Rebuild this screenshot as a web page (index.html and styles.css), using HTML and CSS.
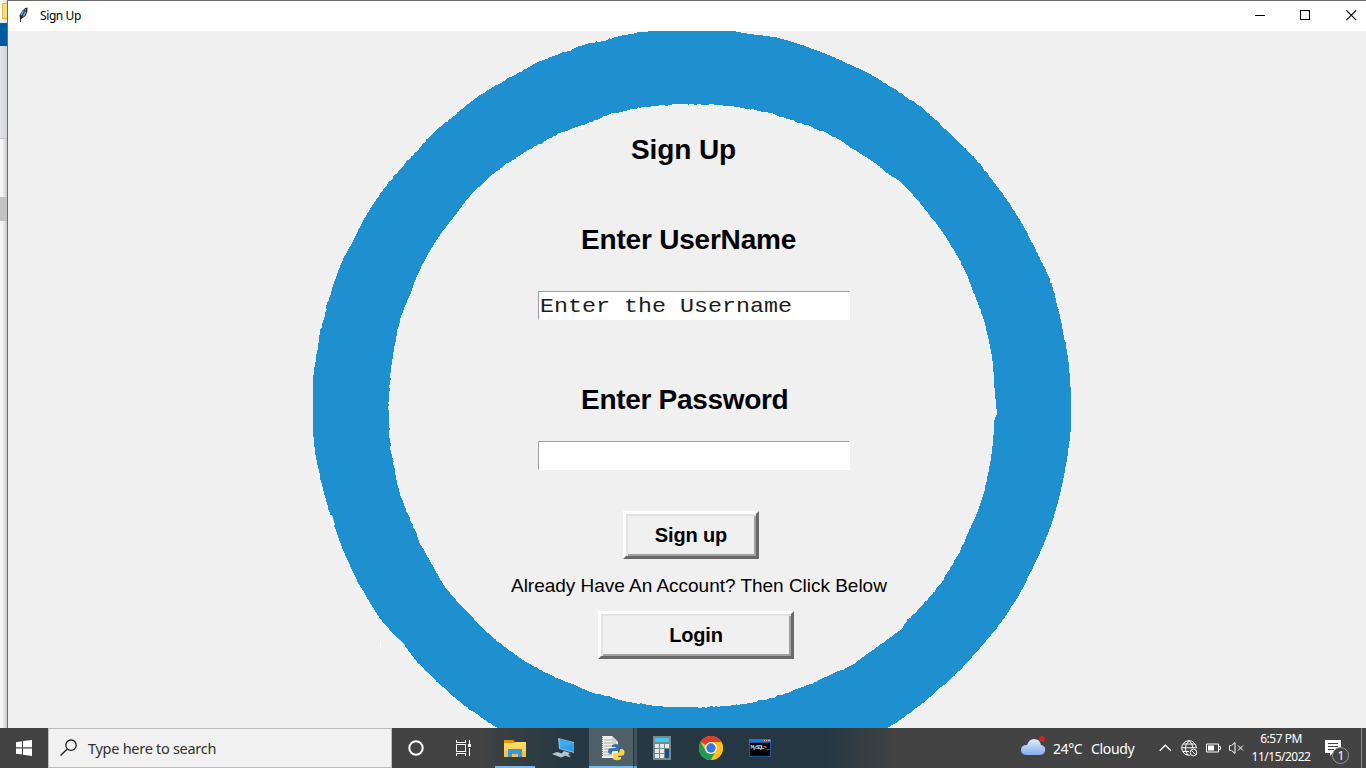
FILE: index.html
```html
<!DOCTYPE html>
<html lang="en">
<head>
<meta charset="utf-8">
<title>Sign Up</title>
<link rel="stylesheet" href="styles.css">
</head>
<body>
<div class="desktop">
  <div class="workspace">
    <div class="behind">
      <div class="behind-top"><i></i></div>
      <div class="behind-blue"></div>
      <div class="behind-ribbon"></div>
      <div class="behind-list"></div>
      <div class="behind-selected"></div>
      <div class="behind-rest"></div>
    </div>
    <main class="window">
      <header class="titlebar">
        <svg class="feather" width="16" height="16" viewBox="0 0 16 16"><path d="M4 15V11L3.500 8.500 6 4 9 1.200 11.500.5 11.300 5 9.500 9 6 11.500 4.600 12Z" fill="#23272e"/><path d="M5 9.500 6 5.500 8.500 2.500 10 2 9.500 5 7.500 9Z" fill="#5b92dd"/><path d="M5 8 7 4M7.500 9.500 10 5" stroke="#a9c8ef" stroke-width=".8"/><path d="M4.500 15V12L9 3" stroke="#151515" stroke-width=".8" fill="none"/></svg>
        <h1 class="title">Sign Up</h1>
        <div class="controls">
          <svg width="11" height="11" shape-rendering="crispEdges"><path d="M0 5h10v1H0z"/></svg>
          <svg width="11" height="11" shape-rendering="crispEdges"><path d="M.5.5h9v9h-9z" fill="none" stroke="#000"/></svg>
          <svg class="close" width="11" height="11"><path d="M.3.300 10.200 10.200M10.200.3.300 10.200" fill="none" stroke="#000" stroke-width="1.100"/></svg>
        </div>
      </header>
      <section class="client">
        <svg class="ring" width="1358" height="697" viewBox="8 31 1358 697">
          <path id="ring" fill="#1e90d0" fill-rule="evenodd" shape-rendering="crispEdges"/>
          <path fill="#fff" d="M320 485l3 2v4h-3zM330 515h2l3 10-5 2zM397 637l8 8v2zM421 667l7 6h-3zM380 642h1v6h-1zM1061 167h1v2h-1zM580 126l5 1-3 3z"/>
        </svg>
        <form class="form">
          <h2 class="heading heading-main">Sign Up</h2>
          <h2 class="heading heading-user">Enter UserName</h2>
          <div class="entry entry-user"><span>Enter the Username</span></div>
          <h2 class="heading heading-pass">Enter Password</h2>
          <div class="entry entry-pass"></div>
          <div class="button button-signup">Sign up</div>
          <p class="hint">Already Have An Account? Then Click Below</p>
          <div class="button button-login">Login</div>
        </form>
      </section>
    </main>
  </div>
  <footer class="taskbar">
    <div class="start"><svg width="16" height="16"><path fill="#fff" d="M0 2.200 6 1.300V7.300H0zM7 1.100 16 0V7.300H7zM0 8.400H6V14.600L0 13.800zM7 8.400H16V16L7 14.700z"/></svg></div>
    <div class="search">
      <svg width="18" height="18" fill="none" stroke="#1a1a1a" stroke-width="1.300"><circle cx="11" cy="6.200" r="5.200"/><path d="M7.300 10 .6 16.500"/></svg>
      <span>Type here to search</span>
    </div>
    <div class="task"><svg width="18" height="18"><circle cx="9" cy="9" r="6.700" fill="none" stroke="#fff" stroke-width="2"/></svg></div>
    <div class="task task-view"><svg width="17" height="16" fill="none" stroke="#fff" shape-rendering="crispEdges"><path d="M1.500 0v2.500h9V0M1.500 4.500h9v7h-9zM1.500 16v-2.500h9V16M14.500 0v4M14.500 8v8"/><path d="M13 4h3v3h-3z" fill="#fff" stroke="none"/></svg></div>
    <div class="task task-open"><svg width="22" height="19"><path fill="#d99a0b" d="M0 1h9l2 2v5H0z"/><path fill="#ffd764" d="M0 4h10l2-1h10v15H0z"/><path fill="#f5c444" d="M0 12h22v6H0z"/><path fill="#3a96dd" d="M4 10h14v8h-4v-3H8v3H4z"/></svg></div>
    <div class="task task-remote"><svg width="24" height="22"><path fill="#9eb2c0" d="M6 1 22 5V16L7 12z"/><path fill="#38aafa" d="M8 2 22 6V15L8 11z"/><path fill="#1b8be0" d="M8 11 22 6V15z" opacity=".35"/><path fill="#b9c5cc" d="M12 14l6 2-2 2 3 1-2 1-8-3zM0 17l5-2 10 3-6 2.500z"/></svg></div>
    <div class="task task-python"><svg width="26" height="26"><path fill="#efefef" d="M3 1h10l6 6v16H3z"/><path d="M5 5h8M5 8h12M5 11h10M5 14h5M5 17h5M5 20h8" stroke="#aaa"/><path fill="#cfcfcf" d="M13 1v6h6z"/><path d="M3.500 2v20" stroke="#777" stroke-dasharray="1 1"/><path fill="#3673a5" d="M13 10q4-2 7 0v6h-6q-1 0-1.500 3Q8 20 9.500 14q1-1 6-1h1v-1h-3.500z"/><path fill="#ffd43b" d="M21 14q6-1 4 6-2 1-6 1h-1v1h4v2q-4 2.500-8 0v-5q1-1.500 6-1.500 1-1 1-3.500z"/></svg></div>
    <div class="group-edge"></div>
    <div class="task task-calc"><svg width="18" height="24"><path fill="#7b8790" d="M0 0h18v24H0z"/><path fill="#38cff0" d="M2 2h14v4H2z"/><path fill="#e8e8e8" d="M2 8h4v4H2zM7 8h4v4H7zM12 8h4v4h-4zM2 13h4v4H2zM7 13h4v4H7zM2 18h4v4H2zM7 18h4v4H7z"/><path fill="#174f8b" d="M12 13h4v9h-4z"/></svg></div>
    <div class="task"><svg width="24" height="24" viewBox="0 0 24 24"><circle cx="12" cy="12" r="12" fill="#fbc118"/><path fill="#e33b2e" d="M12 12 1.600 6A12 12 0 0 1 22.400 6H12z"/><path fill="#229954" d="M1.600 6A12 12 0 0 0 12 24L17.200 15 12 12 6.800 15z"/><path fill="#fbc118" d="M12 24 17.200 15 17 7H22.900A12 12 0 0 1 12 24"/><circle cx="12" cy="12" r="6" fill="#fff"/><circle cx="12" cy="12" r="4.700" fill="#3578e5"/></svg></div>
    <div class="task task-sql"><svg width="22" height="18"><path fill="#1555a0" d="M0 0h22v18H0z"/><path fill="#1e7ad8" d="M0 0h22v3H0z"/><path fill="#e8a496" d="M15 1h1v1h-1zM17 1h1v1h-1zM19 1h2v1h-2z"/><path d="M1 4h20v13H1z"/><text class="sql" x="1.500" y="10" textLength="19">MySQL&gt;_</text></svg></div>
    <div class="tray">
      <svg class="cloud" width="26" height="22"><defs><linearGradient id="c" x2="0" y2="1"><stop stop-color="#e2edfc"/><stop offset="1" stop-color="#83adf0"/></linearGradient></defs><path fill="url(#c)" d="M6 20q-6 0-6-5t6-5q2-6 7-6 6 0 7 6 5 1 4 6-1 4-5 4z"/><circle cx="21" cy="4" r="3" fill="#c42b1c"/></svg>
      <span class="temp">24°C</span><span class="sky">Cloudy</span>
      <svg class="chev" width="13" height="8"><path d="M.7 6.700 6.300 1.200 12 6.700" fill="none" stroke="#fff" stroke-width="1.200"/></svg>
      <svg class="globe" width="17" height="17" fill="none" stroke="#fff"><path d="M9 15.200A7.300 7.300 0 1 1 15.300 8M8 .7Q1 8 7 15.200M8 .7Q12 4 11.800 8M2 4h12M.7 7.800h15M2 11.500h6"/><circle cx="12.500" cy="12.500" r="3.300"/><path d="M10.300 10.300l4.500 4.500"/></svg>
      <svg class="battery" width="16" height="10" fill="none" stroke="#fff"><path d="M.5 1h12v8H.5zM13 3.500h1.500v3H13"/><path d="M2 2.500h6v5H2z" fill="#fff" stroke="none"/></svg>
      <svg class="volume" width="15" height="14" fill="none" stroke="#fff"><path d="M.5 4.500h2l3.500-3v11l-3.500-3h-2zM9 4.500l5 5M14 4.500l-5 5"/></svg>
      <div class="clock"><span>6:57 PM</span><span>11/15/2022</span></div>
      <svg class="notice" width="25" height="25"><path fill="#fff" d="M0 0h16v13H8l-3 3v-3H0z"/><path d="M3 3.500h10M3 6.500h10M3 9.500h6" stroke="#444"/><circle cx="15.500" cy="15.500" r="8" fill="#444" stroke="#999"/><text class="count" x="12.500" y="20">1</text></svg>
      <div class="show-desktop"></div>
    </div>
  </footer>
</div>
<script src="ring.js"></script>
</body>
</html>
```
FILE: ring.js
```js
// Outlines of the brushed ring, as closed point lists.
const outer = `650 31 635 33.3 616.7 37 601.7 41 584.3 44.3 560 54 540 61 527.3 68 510 77.7 493.3 87 473.3 100 453.3 116.3 433.3 133 416.7 151 400 169 381.7 192 370 209.3 360 226.7 351.7 243.3 341.7 262.3 331.7 290 324 317 319.3 335 317.7 348.3 315 363.3 313.3 378.3 313 405 313.3 433.3 315.3 453.3 319 471.7 323.3 490 328.3 508.3 334.3 525.7 342.3 548.3 350 565 358.3 583.3 363.3 591 368.3 600 380 618.3 388.3 628.3 404 645 415 659.3 428.3 673.3 450 693.3 466.7 707.3 486.7 721 496.7 728 520 742 600 780 692 790 780 780 860 744 887.3 728 903.3 717.7 923.3 702.7 941.7 686.7 960 670 983.3 644.3 1003.3 619.3 1021.7 590 1033.3 566.7 1045 541 1053.3 518.3 1061.7 486.7 1067.3 456.7 1070.7 430 1071 405 1070 378.3 1066.7 348.3 1061.7 325 1056.7 301.7 1050.5 281.7 1040 258.3 1030 238.3 1023.3 225 1010 204.3 995 183.3 973.3 156.7 956.7 140 940 124.3 923.3 109 903.3 95 883.3 82 866.7 72.3 848.3 64 835 57.7 813.3 49.3 793.3 42.3 773.3 37 750 34 733.3 31 710 28 692 27 670 28`;
const inner = `700 104.5 673.3 104.7 650 106.3 633.3 109 623.3 111.7 610 114.3 596.7 119.7 583.3 125 560 133 543.3 142.3 526.7 151 511 161 496.7 171 486.7 180 470 196 456.7 213.3 440 235 426.7 256.7 416.7 276.7 410.7 293 403 311 398.3 326.7 395.7 340 393.3 353.3 390.7 371.7 389.3 391.7 388.7 410 390 441.7 394 466.7 398 486.7 405 506.7 413.3 526.7 421.7 546 433.3 566.7 444 585.3 458.3 602.7 471.7 616.7 490 635 513.3 653.3 533.3 666 555 677.3 576.7 685.8 591.7 692.5 610 696.7 623.3 701 646.7 704.3 663.3 706.5 700 707.3 716.7 706.7 736.7 705 761.7 700.3 783.3 694 810 684.3 833.3 673.3 850 666 876.7 647.3 901.7 628.7 906 622 930 596.7 948.3 571.7 963.3 544 968.3 532 973.3 521.7 981.7 500 988.3 473.3 992.7 445 994.7 419 996.7 415 995.5 400 994 381.7 992.7 361.7 988.3 338.3 983.3 318.3 976.7 300 970 283.3 965 271 956.7 255 945 235.7 930 215.7 916.7 199.3 901.7 183.3 886.7 172.7 873.3 161.7 853.3 149.3 835 137.3 803.3 124.3 778.3 116 770 113.3 745 108.3 720 105`;

let seed = 11;
const rand = () => (seed = (seed * 16807) % 2147483647) / 2147483647 - 0.5;

// Smooth curve through the points, sampled every few pixels with a little roughness.
function outline(text) {
  const n = text.split(" ").map(Number);
  const p = [];
  for (let i = 0; i < n.length; i += 2) p.push([n[i], n[i + 1]]);
  const dist = (a, b) => Math.hypot(a[0] - b[0], a[1] - b[1]);
  const tangent = i => {
    const a = p[(i + p.length - 1) % p.length], b = p[(i + 1) % p.length], d = dist(a, b);
    return [(b[0] - a[0]) / d, (b[1] - a[1]) / d];
  };
  const out = [];
  let rough = 0;
  p.forEach((a, i) => {
    const j = (i + 1) % p.length, b = p[j], len = dist(a, b);
    const u = tangent(i), v = tangent(j), steps = Math.max(1, Math.round(len / 2.5));
    if (i % 4 === 0) rough = Math.abs(rand()) * 2;
    for (let k = 0; k < steps; k++) {
      const t = k / steps, t2 = t * t, t3 = t2 * t;
      const q = [0, 1].map(c => (2 * t3 - 3 * t2 + 1) * a[c] + (t3 - 2 * t2 + t) * len * u[c] + (3 * t2 - 2 * t3) * b[c] + (t3 - t2) * len * v[c] + rand() * rough * 1.5);
      out.push(q.map(x => x.toFixed(1)).join(" "));
    }
  });
  return "M" + out.join("L") + "Z";
}
document.getElementById("ring").setAttribute("d", outline(outer) + outline(inner));
```
FILE: styles.css
```css
* { box-sizing: border-box; }
body { margin: 0; overflow: hidden; background: #f0f0f0; color: #000; font-family: "Liberation Sans", Arial, sans-serif; }
svg { display: block; flex: none; }
.desktop { width: 1366px; height: 768px; display: grid; grid-template-rows: 728px 40px; }
.workspace { display: grid; grid-template-columns: 7px 1359px; }
.behind { display: flex; flex-direction: column; background: linear-gradient(90deg, #f5f5f5 30%, #c9c9c9); }
.behind-top { height: 23px; padding: 3px 0 0 2px; background: linear-gradient(90deg, #fff, #ddd); }
.behind-top i { display: block; height: 16px; border: 1px solid #e2bd3b; border-right: 0; background: #f3dc8e; }
.behind-blue { height: 23px; background: #005a9e; }
.behind-ribbon { height: 93px; border-bottom: 1px solid #bfc1c4; background: linear-gradient(90deg, #e2e4e7, #d3d5d8); }
.behind-list { height: 58px; }
.behind-selected { height: 24px; background: #c2c2c2; }
.behind-rest { flex: 1; }
.window { border-left: 1px solid #6b6b6b; border-top: 1px solid #6b6b6b; display: grid; grid-template-rows: 30px 697px; }
.titlebar { display: flex; align-items: center; padding: 0 10px 0 8px; background: #fff; }
.feather { margin: -2px 0 0 0; }
.title { margin: 0 0 0 8px; font: 12px/16px "Noto Sans", sans-serif; letter-spacing: -.4px; }
.controls { display: flex; gap: 34px; margin-left: auto; margin-top: -1px; }
.close { margin: 0 -1px 0 1px; }
.client { position: relative; background: #f0f0f0; }
.ring { position: absolute; left: 0; top: 0; overflow: hidden; }
.form { position: relative; display: flex; flex-direction: column; align-items: flex-start; padding-top: 103px; }
.heading { margin: 0; font-size: 28px; line-height: 32px; font-weight: 700; white-space: nowrap; letter-spacing: -.2px; }
.heading-main { margin-left: 623px; letter-spacing: -.1px; }
.heading-user { margin: 58px 0 0 573px; }
.heading-pass { margin: 64px 0 0 573px; letter-spacing: -.3px; }
.entry { width: 312px; height: 29px; margin-left: 530px; padding-left: 1px; border: 1px solid #fff; border-top-color: #a0a0a0; border-left-color: #a0a0a0; background: #fff; font: 23.33px/28px "Liberation Mono", monospace; white-space: pre; }
.entry span { display: block; color: #1c1c1c; transform: scaleY(.9); transform-origin: 0 20px; }
.entry-user { margin-top: 35px; }
.entry-pass { margin-top: 25px; }
.button { height: 48px; border: 3px solid; border-color: #fff #696969 #696969 #fff; box-shadow: inset 2px 2px #e3e3e3, inset -2px -2px #a0a0a0; font-size: 20px; line-height: 42px; font-weight: 700; text-align: center; letter-spacing: -.15px; }
.button-signup { width: 136px; margin: 41px 0 0 615px; }
.hint { margin: 16px 0 0 503px; font-size: 19px; line-height: 22px; letter-spacing: -.02px; white-space: nowrap; }
.button-login { width: 196px; margin: 14px 0 0 590px; }
.taskbar { display: flex; background: linear-gradient(90deg, #424242 0 480px, #263943 560px, #243742 820px, #434343 900px); color: #fff; font-family: "Noto Sans", sans-serif; }
.start { width: 48px; display: flex; align-items: center; justify-content: center; }
.search { width: 344px; border: 1px solid #bdbdbd; background: #f1f1f1; display: flex; align-items: center; gap: 10px; padding-left: 11px; color: #303030; font-size: 14.500px; letter-spacing: -.28px; }
.task { width: 48px; margin-right: 1px; display: flex; align-items: center; justify-content: center; }
.task-view { padding-right: 3px; }
.task-open { width: 40px; margin: 0 5px 0 5px; border-bottom: 2px solid #76b9ed; }
.task-open svg { margin-top: 2px; }
.task-python { width: 44px; margin: 0; padding: 2px 0 0 2px; background: #506069; border-bottom: 2px solid #76b9ed; }
.group-edge { width: 4px; margin-right: 1px; border-left: 1px solid #25343d; border-bottom: 2px solid #6aa5d4; background: #40525d; }
.sql { fill: #fff; font: 6px "Liberation Mono", monospace; }
.tray { margin-left: auto; display: flex; align-items: center; width: 346px; font-size: 14px; }
.cloud { margin: 0 0 4px 1px; }
.temp { margin-left: 6px; width: 38px; letter-spacing: -.4px; }
.sky { width: 68px; letter-spacing: -.35px; }
.globe { margin-left: 9px; }
.battery { margin-left: 8px; }
.volume { margin-left: 7px; }
.clock { margin-left: 6px; display: flex; flex-direction: column; align-items: center; width: 62px; font-size: 12px; line-height: 18px; letter-spacing: -.5px; }
.notice { margin-left: 13px; margin-top: 8px; }
.count { fill: #fff; font: 12px "Noto Sans", sans-serif; }
.show-desktop { height: 40px; margin-left: auto; width: 5px; border-left: 1px solid #858585; }
```
